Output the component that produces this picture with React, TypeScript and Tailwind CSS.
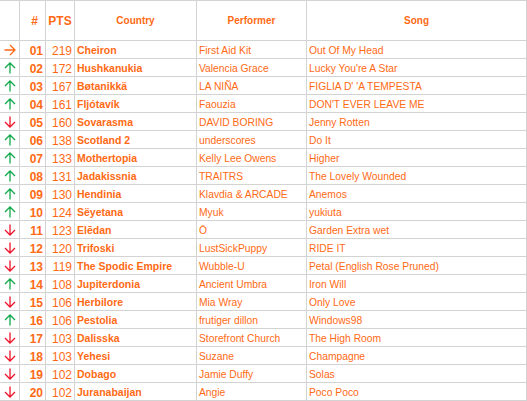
import React from 'react';

type Move = 'up' | 'down' | 'same';

interface Entry {
    rank: string;
    pts: number;
    country: string;
    performer: string;
    song: string;
    move: Move;
}

const entries: Entry[] = [
    { rank: '01', pts: 219, country: 'Cheiron', performer: 'First Aid Kit', song: 'Out Of My Head', move: 'same' },
    { rank: '02', pts: 172, country: 'Hushkanukia', performer: 'Valencia Grace', song: "Lucky You're A Star", move: 'up' },
    { rank: '03', pts: 167, country: 'Bøtanikkä', performer: 'LA NIÑA', song: "FIGLIA D' 'A TEMPESTA", move: 'up' },
    { rank: '04', pts: 161, country: 'Fljótavík', performer: 'Faouzia', song: "DON'T EVER LEAVE ME", move: 'up' },
    { rank: '05', pts: 160, country: 'Sovarasma', performer: 'DAVID BORING', song: 'Jenny Rotten', move: 'down' },
    { rank: '06', pts: 138, country: 'Scotland 2', performer: 'underscores', song: 'Do It', move: 'up' },
    { rank: '07', pts: 133, country: 'Mothertopia', performer: 'Kelly Lee Owens', song: 'Higher', move: 'up' },
    { rank: '08', pts: 131, country: 'Jadakissnia', performer: 'TRAITRS', song: 'The Lovely Wounded', move: 'up' },
    { rank: '09', pts: 130, country: 'Hendinia', performer: 'Klavdia & ARCADE', song: 'Anemos', move: 'up' },
    { rank: '10', pts: 124, country: 'Sëyetana', performer: 'Myuk', song: 'yukiuta', move: 'up' },
    { rank: '11', pts: 123, country: 'Elēdan', performer: 'Ō', song: 'Garden Extra wet', move: 'down' },
    { rank: '12', pts: 120, country: 'Trifoski', performer: 'LustSickPuppy', song: 'RIDE IT', move: 'down' },
    { rank: '13', pts: 119, country: 'The Spodic Empire', performer: 'Wubble-U', song: 'Petal (English Rose Pruned)', move: 'down' },
    { rank: '14', pts: 108, country: 'Jupiterdonia', performer: 'Ancient Umbra', song: 'Iron Will', move: 'up' },
    { rank: '15', pts: 106, country: 'Herbilore', performer: 'Mia Wray', song: 'Only Love', move: 'down' },
    { rank: '16', pts: 106, country: 'Pestolia', performer: 'frutiger dillon', song: 'Windows98', move: 'up' },
    { rank: '17', pts: 103, country: 'Dalisska', performer: 'Storefront Church', song: 'The High Room', move: 'down' },
    { rank: '18', pts: 103, country: 'Yehesi', performer: 'Suzane', song: 'Champagne', move: 'down' },
    { rank: '19', pts: 102, country: 'Dobago', performer: 'Jamie Duffy', song: 'Solas', move: 'down' },
    { rank: '20', pts: 102, country: 'Juranabaijan', performer: 'Angie', song: 'Poco Poco', move: 'down' },
];

const Arrow: React.FC<{ move: Move }> = ({ move }) => {
    const color = move === 'up' ? '#12a94c' : move === 'down' ? '#f0142a' : '#ff6a14';
    const d =
        move === 'up'
            ? 'M6 11.5V1M1 6l5-5 5 5'
            : move === 'down'
            ? 'M6 0.5V11M1 6l5 5 5-5'
            : 'M0.5 6H11M6 1l5 5-5 5';
    return (
        <svg width="12" height="12" viewBox="0 0 12 12" fill="none" stroke={color} strokeWidth={1.3}>
            <path d={d} />
        </svg>
    );
};

const cell = "border-r border-b border-[#d3d3d3] h-[18px] flex items-center overflow-hidden whitespace-nowrap";
const head = "border-r border-b border-t border-[#d3d3d3] h-[41px] flex items-center justify-center font-bold";

const App: React.FC = () => {
    return (
        <div className="w-[527px] h-[401px] bg-white text-[#ff6a14] font-['Liberation_Sans',Arial,sans-serif]">
            <div className="grid grid-cols-[20px_26px_29px_122px_110px_220px]">
                <div className={head}></div>
                <div className={`${head} text-[12px] pl-1`}>#</div>
                <div className={`${head} text-[12px]`}>PTS</div>
                <div className={`${head} text-[10px]`}>Country</div>
                <div className={`${head} text-[10px]`}>Performer</div>
                <div className={`${head} text-[10px]`}>Song</div>
                {entries.map((e) => (
                    <React.Fragment key={e.rank}>
                        <div className={`${cell} justify-center`}><Arrow move={e.move} /></div>
                        <div className={`${cell} justify-end pr-[2px] pt-[2px] text-[12px] font-bold`}>{e.rank}</div>
                        <div className={`${cell} justify-end pr-[2px] pt-[2px] text-[12px]`}>{e.pts}</div>
                        <div className={`${cell} pl-[2px] pt-[2px] text-[10.5px] font-bold`}>{e.country}</div>
                        <div className={`${cell} pl-[2px] pt-[2px] text-[10.3px]`}>{e.performer}</div>
                        <div className={`${cell} pl-[2px] pt-[2px] text-[10.3px]`}>{e.song}</div>
                    </React.Fragment>
                ))}
            </div>
        </div>
    );
};

export default App;
